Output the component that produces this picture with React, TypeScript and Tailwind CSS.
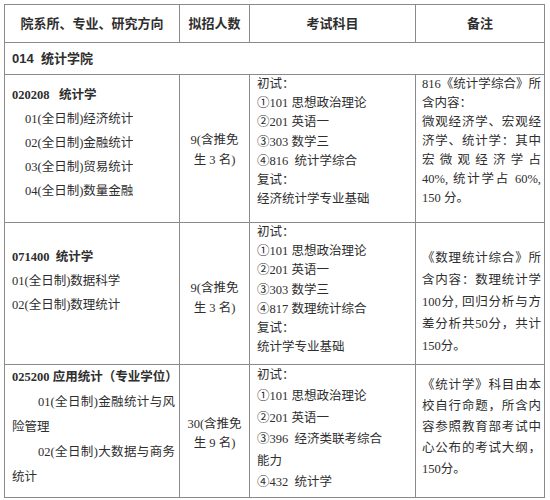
import React from 'react';

const serif = "font-['Liberation_Serif','Noto_Sans_CJK_SC',serif]";
const sans = "font-['Liberation_Sans','Noto_Sans_CJK_SC',sans-serif]";

// one line of a cell that is stretched edge to edge, like the justified source
function Full({ children, className = '' }: { children: React.ReactNode; className?: string }) {
  return <div className={`text-justify [text-align-last:justify] whitespace-pre ${className}`}>{children}</div>;
}

function Line({ children, className = '' }: { children: React.ReactNode; className?: string }) {
  return <div className={`whitespace-pre ${className}`}>{children}</div>;
}

const cell = 'border-r border-b border-[#8a8a8a] overflow-hidden';

export default function App() {
  return (
    <div className={`w-[550px] h-[500px] bg-white pt-[4px] pl-[4px] text-[12.5px] text-[#2e2e2e] ${serif}`}>
      <div className="grid grid-cols-[175px_70px_166px_129px] grid-rows-[38px_32px_148px_142px_133px] w-[541px] border-l border-t border-[#8a8a8a]">
        {/* header */}
        <div className={`${cell} ${sans} flex items-center justify-center text-[13px] font-bold`}>院系所、专业、研究方向</div>
        <div className={`${cell} ${sans} flex items-center justify-center text-[13px] font-bold`}>拟招人数</div>
        <div className={`${cell} ${sans} flex items-center justify-center text-[13px] font-bold`}>考试科目</div>
        <div className={`${cell} ${sans} flex items-center justify-center text-[13px] font-bold`}>备注</div>

        {/* school row */}
        <div className={`${cell} ${sans} col-span-4 flex items-center pl-[7px] text-[13px] font-bold whitespace-pre`}>014  统计学院</div>

        {/* 020208 */}
        <div className={`${cell} pl-[7px] pt-[8px] leading-[24px]`}>
          <Line className="font-bold">020208   统计学</Line>
          <Line className="pl-[13px]">01(全日制)经济统计</Line>
          <Line className="pl-[13px]">02(全日制)金融统计</Line>
          <Line className="pl-[13px]">03(全日制)贸易统计</Line>
          <Line className="pl-[13px]">04(全日制)数量金融</Line>
        </div>
        <div className={`${cell} pt-[55px] leading-[20px] text-center`}>
          <div>9(含推免</div>
          <div>生 3 名)</div>
        </div>
        <div className={`${cell} pl-[7px] leading-[19.2px]`}>
          <Line>初试：</Line>
          <Line>①101 思想政治理论</Line>
          <Line>②201 英语一</Line>
          <Line>③303 数学三</Line>
          <Line>④816  统计学综合</Line>
          <Line>复试：</Line>
          <Line>经济统计学专业基础</Line>
        </div>
        <div className={`${cell} pl-[6px] pr-[3px] leading-[19px]`}>
          <Full>816《统计学综合》所</Full>
          <Line>含内容：</Line>
          <Full>微观经济学、宏观经</Full>
          <Full>济学、统计学：其中</Full>
          <Full>宏微观经济学占</Full>
          <Full>40%, 统计学占 60%,</Full>
          <Line>150 分。</Line>
        </div>

        {/* 071400 */}
        <div className={`${cell} pl-[7px] pt-[22px] leading-[24px]`}>
          <Line className="font-bold">071400  统计学</Line>
          <Line>01(全日制)数据科学</Line>
          <Line>02(全日制)数理统计</Line>
        </div>
        <div className={`${cell} pt-[55px] leading-[20px] text-center`}>
          <div>9(含推免</div>
          <div>生 3 名)</div>
        </div>
        <div className={`${cell} pl-[7px] leading-[19.2px]`}>
          <Line>初试：</Line>
          <Line>①101 思想政治理论</Line>
          <Line>②201 英语一</Line>
          <Line>③303 数学三</Line>
          <Line>④817 数理统计综合</Line>
          <Line>复试：</Line>
          <Line>统计学专业基础</Line>
        </div>
        <div className={`${cell} pl-[6px] pr-[3px] pt-[24px] leading-[22px]`}>
          <Full>《数理统计综合》所</Full>
          <Full>含内容：数理统计学</Full>
          <Full>100分, 回归分析与方</Full>
          <Full>差分析共50分，共计</Full>
          <Line>150分。</Line>
        </div>

        {/* 025200 */}
        <div className={`${cell} pl-[7px] pr-[4px] leading-[25px]`}>
          <Line className="font-bold">025200 应用统计（专业学位）</Line>
          <Full className="pl-[26px]">01(全日制)金融统计与风</Full>
          <Line>险管理</Line>
          <Full className="pl-[26px]">02(全日制)大数据与商务</Full>
          <Line>统计</Line>
        </div>
        <div className={`${cell} pt-[50px] leading-[19px] text-center`}>
          <div>30(含推免</div>
          <div>生 9 名)</div>
        </div>
        <div className={`${cell} pl-[7px] leading-[21.4px]`}>
          <Line>初试：</Line>
          <Line>①101 思想政治理论</Line>
          <Line>②201 英语一</Line>
          <Line>③396  经济类联考综合</Line>
          <Line>能力</Line>
          <Line>④432  统计学</Line>
        </div>
        <div className={`${cell} pl-[6px] pr-[3px] pt-[10px] leading-[21px]`}>
          <Full>《统计学》科目由本</Full>
          <Full>校自行命题，所含内</Full>
          <Full>容参照教育部考试中</Full>
          <Full>心公布的考试大纲，</Full>
          <Line>150分。</Line>
        </div>
      </div>
    </div>
  );
}
